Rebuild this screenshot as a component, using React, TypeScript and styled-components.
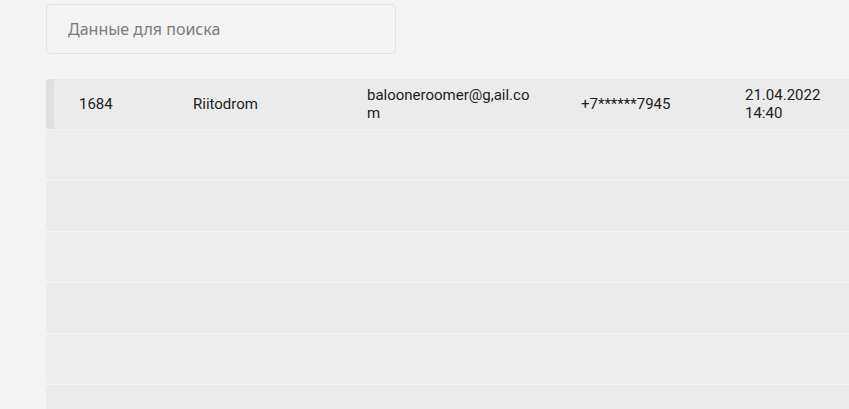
import styled, { createGlobalStyle } from 'styled-components';

const GlobalStyle = createGlobalStyle`
  html, body {
    margin: 0;
    padding: 0;
    background: #f2f3f2;
    overflow: hidden;
  }
`;

interface RowProps {
  readonly even?: boolean
  readonly accent?: boolean
};

interface Client {
  readonly id: string
  readonly name: string
  readonly email: string
  readonly phone: string
  readonly date: string
};

const Page = styled.div`
  padding: 4px 0 0 46px;
  width: 1100px;
  height: 409px;
  box-sizing: border-box;
`;

const SearchInput = styled.input`
  display: block;
  width: 350px;
  height: 50px;
  box-sizing: border-box;
  padding: 0 21px;
  border: 1px solid #e1e3e1;
  border-radius: 4px;
  background: #f2f3f2;
  font-family: "Noto Sans", "Open Sans", sans-serif;
  font-size: 16px;
  color: #333;
  outline: none;

  &::placeholder {
    color: #7b7b7b;
  }
`;

const Table = styled.div`
  display: flex;
  flex-direction: column;
  gap: 1px;
  margin-top: 25px;
`;

const Row = styled.div<RowProps>`
  display: grid;
  grid-template-columns: 114px 174px 214px 164px 150px 1fr;
  height: 50px;
  align-items: center;
  padding-left: 8px;
  border-radius: 3px;
  background: ${({ even }) => (even ? '#ecedec' : '#ebebeb')};
  box-shadow: ${({ accent }) => (accent ? 'inset 8px 0 0 #e0e0e0' : 'none')};
  font-family: Roboto, "Liberation Sans", sans-serif;
  font-size: 15px;
  line-height: 18px;
  color: #1c1c1c;
`;

const Cell = styled.div`
  padding: 0 16px 0 25px;
  word-break: break-all;
`;

const DateCell = styled(Cell)`
  word-break: normal;
  max-width: 90px;
`;

const clients: Client[] = [
  { id: '1684', name: 'Riitodrom', email: 'balooneroomer@g,ail.com', phone: '+7******7945', date: '21.04.2022 14:40' }
];

const App = (): JSX.Element => {
  const emptyRows = Array.from({ length: 6 }, (_, i) => i);
  return (
    <>
      <GlobalStyle />
      <Page>
        <SearchInput placeholder="Данные для поиска" />
        <Table>
          {clients.map((c) => (
            <Row key={c.id} accent>
              <Cell>{c.id}</Cell>
              <Cell>{c.name}</Cell>
              <Cell>{c.email}</Cell>
              <Cell>{c.phone}</Cell>
              <DateCell>{c.date}</DateCell>
              <Cell />
            </Row>
          ))}
          {emptyRows.map((i) => (
            <Row key={i} even={i % 2 === 0} />
          ))}
        </Table>
      </Page>
    </>
  );
};

export default App;
